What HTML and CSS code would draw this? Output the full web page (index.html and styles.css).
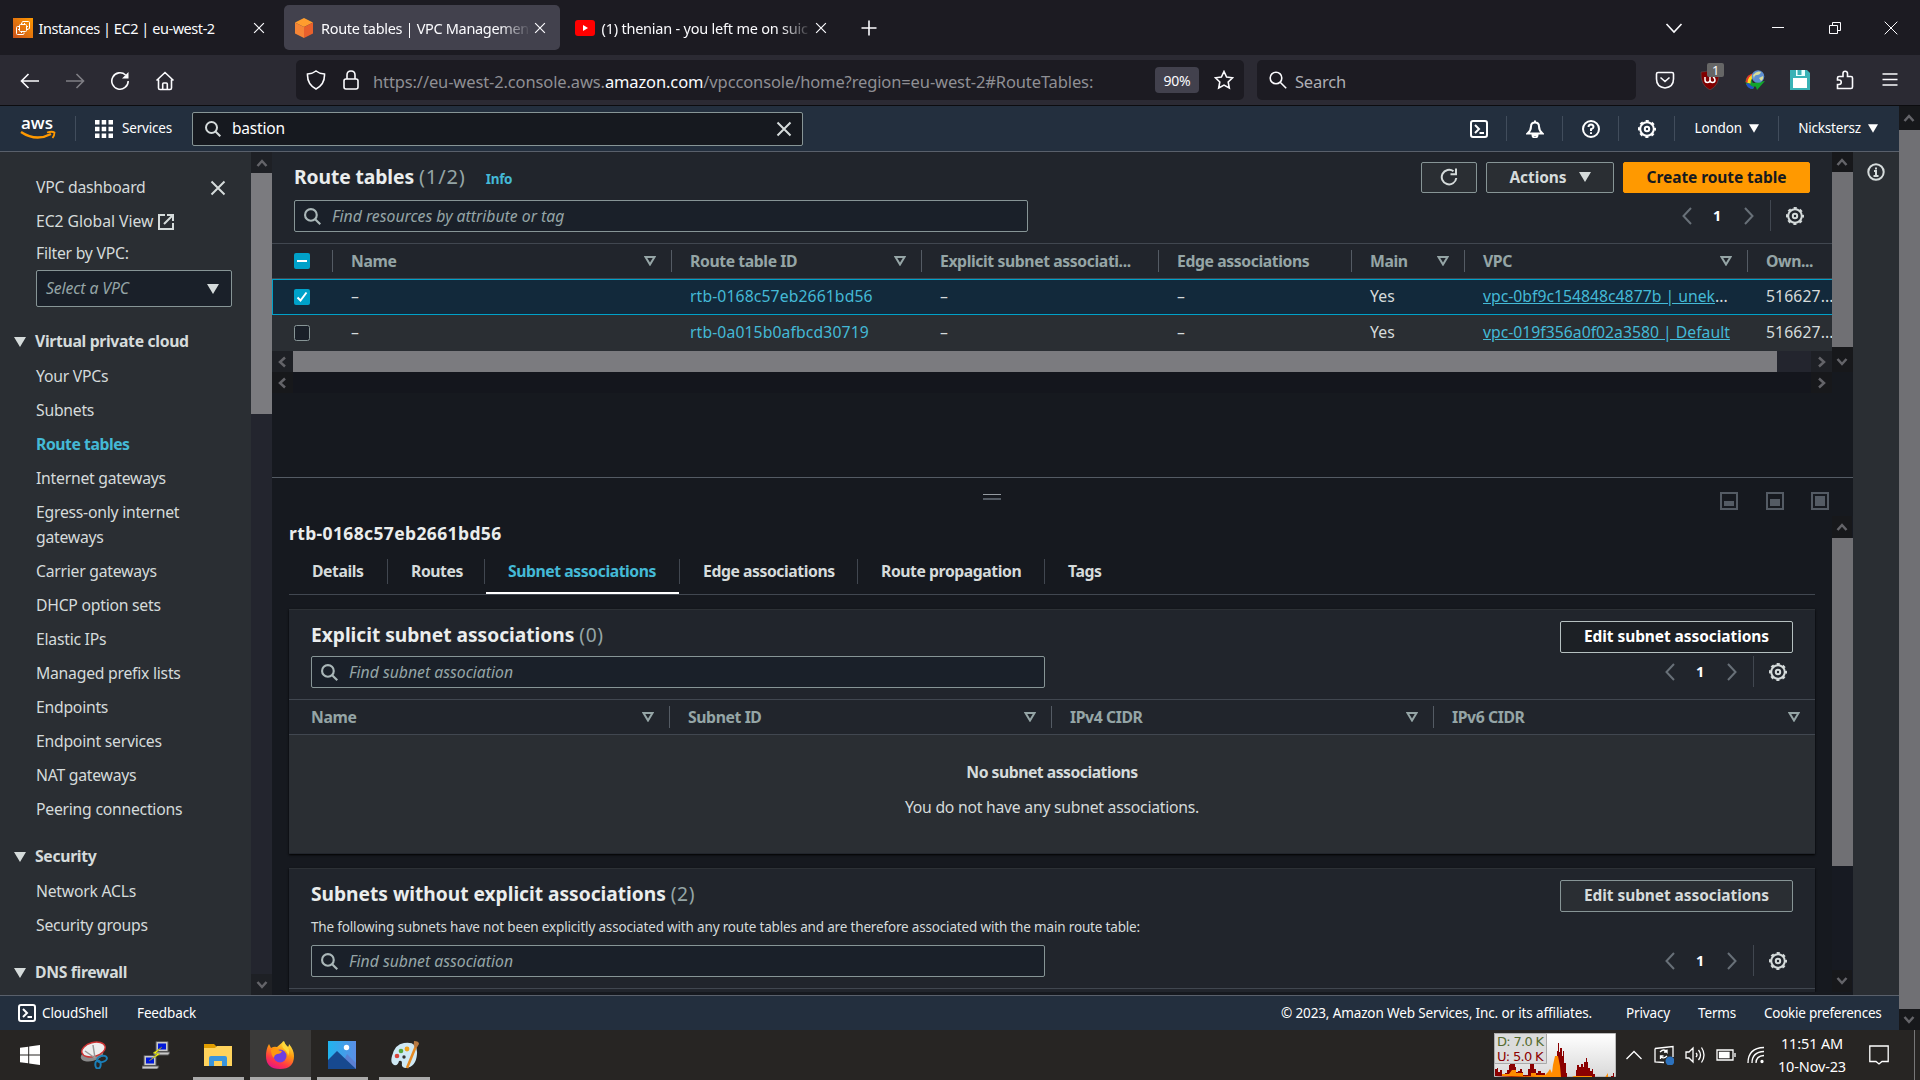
FILE: index.html
```html
<!DOCTYPE html>
<html lang="en">
<head>
<meta charset="utf-8">
<title>Route tables | VPC Management Console</title>
<link rel="stylesheet" href="styles.css">
</head>
<body>
<svg class="defs" width="0" height="0">
  <symbol id="x" viewBox="0 0 16 16"><path d="M1.500 1.500l13 13M14.500 1.500l-13 13"/></symbol>
  <symbol id="search" viewBox="0 0 16 16"><circle cx="6.500" cy="6.500" r="5.500"/><path d="M10.500 10.500L15.300 15.300"/></symbol>
  <symbol id="gear" viewBox="0 0 18 18"><circle cx="9" cy="9" r="6.800"/><circle cx="9" cy="9" r="8" stroke-dasharray="3.140 3.143" stroke-dashoffset="1.570"/><circle cx="9" cy="9" r="2.200"/></symbol>
  <symbol id="shell" viewBox="0 0 18 18"><rect x="1" y="1" width="16" height="16" rx="2"/><path d="M5 5l4 4-4 4M9.500 13H14"/></symbol>
  <symbol id="up" viewBox="0 0 12 8"><path d="M1.500 7L6 2l4.500 5"/></symbol>
  <symbol id="down" viewBox="0 0 12 8"><path d="M1.500 1L6 6l4.500-5"/></symbol>
  <symbol id="left" viewBox="0 0 8 12"><path d="M7 1.500L2 6l5 4.500"/></symbol>
  <symbol id="right" viewBox="0 0 8 12"><path d="M1 1.500L6 6l-5 4.500"/></symbol>
  <symbol id="pl" viewBox="0 0 10 18"><path d="M9 1L1.500 9 9 17"/></symbol>
  <symbol id="pr" viewBox="0 0 10 18"><path d="M1 1l7.500 8L1 17"/></symbol>
  <symbol id="tri" viewBox="0 0 12 10"><path d="M0 0h12L6 10z"/></symbol>
  <symbol id="sort" viewBox="0 0 12 10"><path d="M1.500 1h9L6 8.500z"/></symbol>
</svg>

<div class="tabbar">
  <div class="tab">
    <svg class="fav" viewBox="0 0 20 20"><defs><linearGradient id="ec" x1="0" y1="1" x2="1" y2="0"><stop stop-color="#c8511b"/><stop offset="1" stop-color="#ff9900"/></linearGradient></defs><path fill="url(#ec)" d="M0 0h20v20H0z"/><g fill="none" stroke="#fff"><path d="M9 5.500V4.500Q9 3.500 10 3.500h5.500q1 0 1 1V10q0 1-1 1h-1M5.500 8.500h-1q-1 0-1 1v6q0 1 1 1H10q1 0 1-1v-1"/><rect x="6.500" y="6.500" width="7" height="7" rx="1"/><path d="M8.500 5v1.500M11.500 5v1.500M5 8.500h1.500M5 11.500h1.500M13.500 8.500H15M13.500 11.500H15M8.500 13.500V15"/></g></svg>
    <span class="tab-title t1">Instances | EC2 | eu-west-2</span>
    <svg class="tab-x s"><use href="#x"/></svg>
  </div>
  <div class="tab active">
    <svg class="fav" viewBox="0 0 20 20"><path fill="#ff9d2e" d="M10 0l9 4.500L10 9 1 4.500z"/><path fill="#f58536" d="M1 4.500L10 9v11l-9-4.500z"/><path fill="#e8602c" d="M19 4.500L10 9v11l9-4.500z"/></svg>
    <span class="tab-title t2">Route tables | VPC Management</span>
    <svg class="tab-x s"><use href="#x"/></svg>
  </div>
  <div class="tab">
    <svg class="fav" viewBox="0 0 20 20"><path d="M0 5q0-3 3-3h14q3 0 3 3v10q0 3-3 3H3q-3 0-3-3z" fill="#f00"/><path d="M8 7l5 3-5 3z" fill="#fff"/></svg>
    <span class="tab-title t3">(1) thenian - you left me on suic</span>
    <svg class="tab-x s"><use href="#x"/></svg>
  </div>
  <svg class="plus s" viewBox="0 0 16 16"><path d="M8 .5v15M.5 8h15"/></svg>
  <div class="win">
    <svg class="s" width="18" height="12" viewBox="0 0 18 12"><path d="M1.500 2L9 10l7.500-8"/></svg>
    <svg class="s thin" width="14" height="14" viewBox="0 0 14 14"><path d="M1 6.500h12"/></svg>
    <svg class="s thin" width="14" height="14" viewBox="0 0 14 14"><path d="M1.500 4.500h8v8h-8zM4.500 4V1.500h8v8H10"/></svg>
    <svg class="s thin" width="14" height="14" viewBox="0 0 14 14"><path d="M.7.7l12.600 12.600M13.300.7L.7 13.300"/></svg>
  </div>
</div>

<div class="toolbar">
  <div class="navbtns">
    <svg class="s" viewBox="0 0 20 20"><path d="M19 10H2M8.500 3L1.500 10l7 7"/></svg>
    <svg class="s dim" viewBox="0 0 20 20"><path d="M1 10h17M11.500 3l7 7-7 7"/></svg>
    <svg class="s" viewBox="0 0 20 20"><path d="M18.200 10a8.200 8.200 0 1 1-2.600-6"/><path d="M18.500 1v6.500H12z" fill="#fbfbfe" stroke="none"/></svg>
    <svg class="s" viewBox="0 0 20 20"><path d="M1.500 9.500L10 1.500l8.500 8M3.500 8.500V17q0 1.500 1.500 1.500h10q1.500 0 1.500-1.500V8.500M7.700 18.500V13q0-1 1-1h2.600q1 0 1 1v5.500"/></svg>
  </div>
  <div class="url">
    <svg class="s shield" viewBox="0 0 20 20"><path d="M10 1Q13 3.500 18.500 4q.5 10.500-8.500 15Q1 14.500 1.500 4 7 3.500 10 1z"/></svg>
    <svg class="s lock" viewBox="0 0 18 20"><rect x="2" y="9" width="14" height="10" rx="2"/><path d="M5 9V5q0-4 4-4t4 4v4"/></svg>
    <span class="address">https://eu-west-2.console.aws.<b>amazon.com</b>/vpcconsole/home?region=eu-west-2#RouteTables:</span>
    <span class="zoomlevel">90%</span>
    <svg class="s star" viewBox="0 0 20 20"><path d="M10 1.500l2.600 5.500 6 .8-4.400 4.200 1.100 6-5.300-2.900L4.700 18l1.100-6L1.400 7.800l6-.8z"/></svg>
  </div>
  <div class="searchbar"><svg class="s" viewBox="0 0 18 18"><circle cx="7" cy="7" r="5.800"/><path d="M11.200 11.200l6 6"/></svg><span>Search</span></div>
  <div class="ext">
    <svg class="s" viewBox="0 0 20 20"><path d="M3 2.500h14q1.500 0 1.500 1.500v5q0 8-8.500 9Q1.500 17 1.500 9V4q0-1.500 1.500-1.500zM5.500 7.500l4.500 4 4.500-4"/></svg>
    <span class="ublock"><svg viewBox="0 0 20 20"><path fill="#800000" stroke="#555" stroke-width=".6" d="M10 0q4 2 9 2 1 13-9 18Q0 15 1 2q5 0 9-2z"/><path d="M5 7v3q0 2.500 2.500 2.500T10 10V7M10 10q0 2.500 2.500 2.500T15 10q0-2-2-3" fill="none" stroke="#fff" stroke-width="1.500"/></svg><i>1</i></span>
    <svg viewBox="0 0 20 20"><path d="M10 4Q1 4 .5 12 2 19 8 19l3-5q-5 0-4-6z" fill="#169a35"/><path d="M.5 12Q1 4 10 3v2Q4 6 3 13z" fill="#e5352d"/><path d="M2.500 13q0-7 7-9l1 2.500q-5 1-5 7z" fill="#ffd91f"/><path d="M1 14q2 5 7 5l1-2q-4-1-5-4z" fill="#2450c8"/><path d="M6 13.500L20 11l-8 9-1-3z" fill="#11a52c"/><circle cx="13" cy="6.500" r="6.300" fill="#5e8fd0"/><path d="M8 5q4-5 8-3-1 3-4 3t-3 4zM14 8l4-2q1 3-2 5z" fill="#d7dc9b"/></svg>
    <svg viewBox="0 0 20 20"><path fill="#38b2b6" d="M0 0h17l3 3v17H0z"/><path fill="#e9ffff" d="M6 0h9v6H6z"/><path fill="#38b2b6" d="M7.500 0h4v5h-4z"/><path fill="#fff" d="M3 8h14v10H3z"/></svg>
    <svg class="s" viewBox="0 0 20 20"><path d="M2.500 18.500v-4H4a2 2 0 0 0 0-4.500H2.500V8q0-1.500 1.500-1.500h4V3.500a2 2 0 0 1 4.500 0v3h3.500q1.500 0 1.500 1.500v9q0 1.500-1.500 1.500z"/></svg>
    <svg class="s" viewBox="0 0 20 20"><path d="M2.500 4h15M2.500 9.500h15M2.500 15h15"/></svg>
  </div>
</div>

<div class="page">
<div class="site">
  <header class="aws">
    <svg class="logo" viewBox="0 0 36 22"><text x="1" y="11" textLength="32" lengthAdjust="spacingAndGlyphs">aws</text><path d="M1 14q15 10 30 2" fill="none" stroke="#f90" stroke-width="2.400"/><path d="M27 14.500q5-1.500 7.500 0 0 3-2 5.500" fill="none" stroke="#f90" stroke-width="1.800"/></svg>
    <div class="services"><svg viewBox="0 0 18 18"><path d="M0 0h4.500v4.500H0zM6.700 0h4.500v4.500H6.700zM13.500 0H18v4.500h-4.500zM0 6.700h4.500v4.500H0zM6.700 6.700h4.500v4.500H6.700zM13.500 6.700H18v4.500h-4.500zM0 13.500h4.500V18H0zM6.700 13.500h4.500V18H6.700zM13.500 13.500H18V18h-4.500z" fill="#fff"/></svg><span>Services</span></div>
    <div class="gsearch"><svg class="s"><use href="#search"/></svg><span>bastion</span><svg class="s gx"><use href="#x"/></svg></div>
    <nav class="acct">
      <span class="cell"><svg class="s" viewBox="0 0 18 18"><use href="#shell"/></svg></span>
      <span class="cell"><svg class="s" viewBox="0 0 18 18"><path d="M1.500 13.500Q5 10.500 5 6.500T9 2.500t4 4 3.500 7zM9 2.500V.5"/><path d="M6.500 15a2.500 2.500 0 0 0 5 0z"/></svg></span>
      <span class="cell"><svg class="s" viewBox="0 0 18 18"><circle cx="9" cy="9" r="8"/><path d="M6.500 7q0-2.500 2.500-2.500T11.500 7Q11.500 8.300 9 9.300V11M9 12.200V14"/></svg></span>
      <span class="cell"><svg class="s"><use href="#gear"/></svg></span>
      <span class="cell london">London<svg class="tri"><use href="#tri"/></svg></span>
      <span class="user">Nickstersz<svg class="tri"><use href="#tri"/></svg></span>
    </nav>
  </header>

  <div class="body">
    <aside class="side">
      <div class="row-x"><span>VPC dashboard</span><svg class="s"><use href="#x"/></svg></div>
      <div class="ec2">EC2 Global View <svg class="s" viewBox="0 0 16 16"><path d="M7 1H1v14h14V9M9 1h6v6M15 1L6 10"/></svg></div>
      <div class="filter">Filter by VPC:</div>
      <div class="select"><span>Select a VPC</span><svg><use href="#tri"/></svg></div>
      <h3><svg><use href="#tri"/></svg>Virtual private cloud</h3>
      <ul><li>Your VPCs</li><li>Subnets</li><li class="cur">Route tables</li><li>Internet gateways</li><li>Egress-only internet<br>gateways</li><li>Carrier gateways</li><li>DHCP option sets</li><li>Elastic IPs</li><li>Managed prefix lists</li><li>Endpoints</li><li>Endpoint services</li><li>NAT gateways</li><li>Peering connections</li></ul>
      <h3><svg><use href="#tri"/></svg>Security</h3>
      <ul><li>Network ACLs</li><li>Security groups</li></ul>
      <h3><svg><use href="#tri"/></svg>DNS firewall</h3>
    </aside>
    <div class="vbar side-bar"><b><svg><use href="#up"/></svg></b><i></i><b class="end"><svg><use href="#down"/></svg></b></div>

    <main class="main">
      <section class="top">
        <div class="top-content">
          <div class="head">
            <div class="title-row"><h1>Route tables <span>(1/2)</span></h1><a class="info">Info</a>
              <div class="btns"><button class="refresh"><svg class="s" viewBox="0 0 18 18"><path d="M16.300 10A7.300 7.300 0 1 1 13.500 3.300M16 .5v5.700h-5.500"/></svg></button><button class="actions">Actions<svg><use href="#tri"/></svg></button><button class="primary">Create route table</button></div>
            </div>
            <div class="find-row"><div class="find"><svg class="s"><use href="#search"/></svg><em>Find resources by attribute or tag</em></div>
              <div class="pager"><svg class="s arr"><use href="#pl"/></svg><b>1</b><svg class="s arr"><use href="#pr"/></svg><i></i><svg class="s gear"><use href="#gear"/></svg></div></div>
          </div>
          <div class="tr th">
            <div><svg class="cb" viewBox="0 0 16 16"><rect width="16" height="16" rx="2" fill="#00a1c9"/><path d="M3 8h10" stroke="#fff" stroke-width="2"/></svg></div>
            <div>Name<svg class="sort"><use href="#sort"/></svg></div><div>Route table ID<svg class="sort"><use href="#sort"/></svg></div><div>Explicit subnet associati...</div><div>Edge associations</div><div>Main<svg class="sort"><use href="#sort"/></svg></div><div>VPC<svg class="sort"><use href="#sort"/></svg></div><div>Own...</div>
          </div>
          <div class="tr td sel">
            <div><svg class="cb" viewBox="0 0 16 16"><rect width="16" height="16" rx="2" fill="#00a1c9"/><path d="M3.500 8.500l3 3 6-8" stroke="#fff" stroke-width="2" fill="none"/></svg></div>
            <div>–</div><div><a>rtb-0168c57eb2661bd56</a></div><div>–</div><div>–</div><div>Yes</div><div><a class="u">vpc-0bf9c154848c4877b | unek</a>...</div><div>516627...</div>
          </div>
          <div class="tr td">
            <div><svg class="cb" viewBox="0 0 16 16"><rect x=".5" y=".5" width="15" height="15" rx="2" fill="#1a2029" stroke="#879596"/></svg></div>
            <div>–</div><div><a>rtb-0a015b0afbcd30719</a></div><div>–</div><div>–</div><div>Yes</div><div><a class="u">vpc-019f356a0f02a3580 | Default</a></div><div>516627...</div>
          </div>
          <div class="hbar"><b><svg><use href="#left"/></svg></b><i></i><b class="end"><svg><use href="#right"/></svg></b></div>
          <div class="hbar dark"><b><svg><use href="#left"/></svg></b><b class="end"><svg><use href="#right"/></svg></b></div>
        </div>
        <div class="vbar top-bar"><b><svg><use href="#up"/></svg></b><i></i><b class="end"><svg><use href="#down"/></svg></b></div>
      </section>

      <section class="split">
        <div class="split-head">
          <div class="grip"></div>
          <div class="sizes">
            <svg viewBox="0 0 18 18"><path d="M1 1h16v16H1z"/><path class="f" d="M4 9h10v5H4z"/></svg>
            <svg viewBox="0 0 18 18"><path d="M1 1h16v16H1z"/><path class="f" d="M4 7h10v7H4z"/></svg>
            <svg viewBox="0 0 18 18"><path d="M1 1h16v16H1z"/><path class="f" d="M4 4h10v10H4z"/></svg>
          </div>
        </div>
        <div class="split-body">
          <div class="detail">
            <h2 class="rid">rtb-0168c57eb2661bd56</h2>
            <div class="tabs"><span class="w1">Details</span><span class="w2">Routes</span><span class="w3 on">Subnet associations</span><span class="w4">Edge associations</span><span class="w5">Route propagation</span><span class="w6">Tags</span></div>
            <div class="card c1">
              <div class="card-title"><h2>Explicit subnet associations <span>(0)</span></h2><button class="hover">Edit subnet associations</button></div>
              <div class="find-row"><div class="find"><svg class="s"><use href="#search"/></svg><em>Find subnet association</em></div>
                <div class="pager"><svg class="s arr"><use href="#pl"/></svg><b>1</b><svg class="s arr"><use href="#pr"/></svg><i></i><svg class="s gear"><use href="#gear"/></svg></div></div>
              <div class="tr th"><div>Name<svg class="sort"><use href="#sort"/></svg></div><div>Subnet ID<svg class="sort"><use href="#sort"/></svg></div><div>IPv4 CIDR<svg class="sort"><use href="#sort"/></svg></div><div>IPv6 CIDR<svg class="sort"><use href="#sort"/></svg></div></div>
              <div class="empty"><b>No subnet associations</b><span>You do not have any subnet associations.</span></div>
            </div>
            <div class="card c2">
              <div class="card-title"><h2>Subnets without explicit associations <span>(2)</span></h2><button>Edit subnet associations</button></div>
              <p>The following subnets have not been explicitly associated with any route tables and are therefore associated with the main route table:</p>
              <div class="find-row"><div class="find"><svg class="s"><use href="#search"/></svg><em>Find subnet association</em></div>
                <div class="pager"><svg class="s arr"><use href="#pl"/></svg><b>1</b><svg class="s arr"><use href="#pr"/></svg><i></i><svg class="s gear"><use href="#gear"/></svg></div></div>
              <div class="edge"></div>
            </div>
          </div>
          <div class="vbar split-bar"><b><svg><use href="#up"/></svg></b><i></i><b class="end"><svg><use href="#down"/></svg></b></div>
        </div>
      </section>
    </main>
    <div class="tools"><svg class="s" viewBox="0 0 18 18"><circle cx="9" cy="9" r="7.700"/><path d="M7 8h2v5M6.500 13h5M9 4.500v2"/></svg></div>
  </div>

  <footer class="foot"><svg class="s" viewBox="0 0 18 18"><use href="#shell"/></svg><span class="cs">CloudShell</span><span class="fb">Feedback</span><span class="copy">© 2023, Amazon Web Services, Inc. or its affiliates.</span><span class="pv">Privacy</span><span class="tm">Terms</span><span class="ck">Cookie preferences</span></footer>
</div>
<div class="vbar page-bar"><b><svg><use href="#up"/></svg></b><i></i><b class="end"><svg><use href="#down"/></svg></b></div>
</div>

<div class="taskbar">
  <div class="app start"><svg viewBox="0 0 20 20"><path fill="#fff" d="M0 2.800l8.200-1.100v7.800H0zM9.200 1.500L20 0v9.500H9.200zM0 10.500h8.200v7.800L0 17.200zM9.200 10.500H20V20L9.200 18.500z"/></svg></div>
  <div class="app"><svg viewBox="0 0 28 28"><ellipse cx="12" cy="14" rx="11.500" ry="6" transform="rotate(-15 12 14)" fill="#8b8b8b"/><ellipse cx="13.500" cy="8.500" rx="12" ry="7" transform="rotate(-15 13.500 8.500)" fill="#eee" stroke="#c33" stroke-width="1.500"/><path d="M13 4l2 13M5 10l10 7" stroke="#999" stroke-width="1.500"/><g fill="none" stroke="#1b7fb8" stroke-width="2"><ellipse cx="22" cy="18" rx="5" ry="3" transform="rotate(-15 22 18)"/><ellipse cx="18" cy="23.500" rx="2.700" ry="4"/></g></svg></div>
  <div class="app"><svg viewBox="0 0 28 28"><path fill="#c9c9c9" stroke="#555" d="M14 .5h12v10H14zM12 11h16l-1.500 3H12zM2 14.500h12v10H2zM0 25h17l-1.500 3H0z"/><path fill="#0018d8" d="M16 2.500h8v6h-8zM4 16.500h8v6H4z"/><path fill="#ff0" stroke="#883" stroke-width=".5" d="M20 6l-9 6 4 1-8 7 11-7-4-1z"/></svg></div>
  <div class="app open"><svg viewBox="0 0 28 28"><path fill="#e09d00" d="M0 3h10l3 3v5H0z"/><path fill="#ffd35c" d="M0 7h11l2-2h15v20H0z"/><path fill="#3a95dd" d="M5 25V17q0-2 2-2h14q2 0 2 2v8h-5v-5h-8v5z"/></svg></div>
  <div class="app open focus"><svg viewBox="0 0 28 28"><defs><linearGradient id="fx" x1=".8" y1="0" x2=".3" y2="1"><stop stop-color="#fff44f"/><stop offset=".4" stop-color="#ff980e"/><stop offset=".75" stop-color="#ff3647"/><stop offset="1" stop-color="#e31587"/></linearGradient></defs><path fill="url(#fx)" d="M18 0q1 4 4 6 1-1 1-3 5 6 5 12 0 13-14 13T0 15Q0 8 3 3l2 4q3-2 6-1z"/><circle cx="14" cy="15" r="6.500" fill="#6f3fe0"/><path fill="#ff980e" d="M5 9q4-2 6-1 2 2 5 2-1 3-5 3-3 1-3 4-3-3-3-8z"/><path fill="#ffd93a" d="M17 0q-2 5 1 8 4 3 4 7 3-7-2-11z"/></svg></div>
  <div class="app open"><svg viewBox="0 0 28 28"><defs><linearGradient id="ph" x2="1"><stop stop-color="#20b4ee"/><stop offset="1" stop-color="#5b8fe6"/></linearGradient></defs><path fill="url(#ph)" d="M0 0h28v28H0z"/><path fill="#5b80d2" d="M19 13l9 9v6H12z"/><path fill="#17498f" d="M0 19L9 10l19 18H0z"/><circle cx="18.500" cy="6.500" r="2.700" fill="#fff"/></svg></div>
  <div class="app open"><svg viewBox="0 0 28 28"><path fill="#cfe9f5" d="M13 2q14-2 13 11-1 13-11 14-5 0-4-5 0-3-3-2-1 5-5 4-4-2-2-9Q4 3 13 2z"/><circle cx="6" cy="15" r="2.300" fill="#d9443b"/><circle cx="10" cy="10" r="2.300" fill="#55a83e"/><circle cx="16" cy="8" r="2.400" fill="#f0a21d"/><circle cx="13" cy="16" r="1.700" fill="#333"/><path stroke="#e58a23" stroke-width="2.500" d="M25 5L16 27"/><path fill="#b87a43" d="M23 0q5 0 5 3-1 3-4 4-2-3-1-7z"/></svg></div>
  <div class="tray">
    <div class="net"><svg viewBox="0 0 122 44"><defs><linearGradient id="g" x2="0" y2="1"><stop stop-color="#fff"/><stop offset="1" stop-color="#d9d9d9"/></linearGradient></defs><path fill="url(#g)" stroke="#bbb" d="M.5.500h121v43H.5z"/><path fill="#8b0000" d="M1 43V36h2v-1h1v4h2v-2h2v4h3v-1h2v-3h2v-5h1v-2h5v4h1v5h2v-1h2v-2h2v3h1v3h5v-6h2v-6h4v6h2v4h2v-2h3v2h4v2h5v-2h3v-2h2v-3h1v-12h1v-5h1v-8h1v9h1v-4h2v8h1v-5h1v12h2v10h1v4h2v2h6v-2h1v-7h1v-5h2v2h2v-3h2v3h1v-5h2v-4h1v4h1v6h2v3h2v-2h1v5h2v6h1v2h3v1h9v-2h3v-5h2v-3h1v10z"/><path fill="#ff8c00" d="M8 43v-2h7l3-4h4v3h7v3h8v-3h5v2h9l3-3 2-3 2 4 1-8 2-9h3l2 10 1 11h7l2 1 4-2h18v3h12l4-6v6z"/><path fill="#dcdcdc" stroke="#aaa" d="M.5.500h52v30H.5z"/></svg><span class="d">D: 7.0 K</span><span class="up">U: 5.0 K</span></div>
    <svg class="s" width="18" height="18" viewBox="0 0 18 18"><path d="M1.500 13L9 5.500l7.500 7.500"/></svg>
    <svg class="s" width="20" height="20" viewBox="0 0 20 20"><path d="M1 3.500L19 1.500V12M1 3.500V17l9 .5M6 7q4-4 7 0V4.500M13 7h-3M13 11q-3 3-6 1M6.500 14v-3h3"/><circle cx="16" cy="16" r="4.500" fill="#2d72bd" stroke="none"/></svg>
    <svg class="s" width="20" height="20" viewBox="0 0 20 20"><path d="M1 7h3l4-4v14l-4-4H1zM11 8q2 2 0 4M13.500 5q4 5 0 10M16.500 2.500q5 7.500 0 15"/></svg>
    <svg class="s" width="20" height="14" viewBox="0 0 20 14"><path d="M1 2h16v10H1zM19 5v4"/><path d="M3.500 4.500h9.500v5H3.500z" fill="#fff"/></svg>
    <svg class="s" width="18" height="18" viewBox="0 0 18 18"><path d="M1 17Q1 2 17 1.500M5 17Q5 6 17 5.500M9 17q0-7 8-7.500"/><circle cx="15" cy="15.500" r="1" fill="#fff"/></svg>
    <div class="clock"><span>11:51 AM</span><span>10-Nov-23</span></div>
    <svg class="s note" width="20" height="20" viewBox="0 0 20 20"><path d="M.8 1h18.400v15.500H13L10 19l-3-2.500H.8z"/></svg>
    <span class="peek"></span>
  </div>
</div>
</body>
</html>
```
FILE: styles.css
```css
*{box-sizing:border-box}
body{margin:0;width:1920px;height:1080px;overflow:hidden;background:#16191f;color:#d5dbdb;font:15.750px/25px "Noto Sans","Open Sans",sans-serif;letter-spacing:-.25px}
h1,h2,h3,ul,p{margin:0;padding:0;font-weight:700}
ul{list-style:none;font-weight:400}
svg{display:block;flex:none}
.defs{position:absolute}
.s{fill:none;stroke:currentColor;stroke-width:1.600}
.thin{stroke-width:1}
a{color:#44b9d6}

.tabbar{display:flex;align-items:center;height:55px;background:#1c1b22;color:#fbfbfe;font-size:14.500px;letter-spacing:-.45px}
.tab{display:flex;align-items:center;width:282px;height:45px;padding-left:12.500px;border-radius:5px}
.tab.active{width:276px;margin-left:2px;padding-left:10px;background:#42414d}
.tab:nth-child(3){margin-left:2px}
.fav{width:20px;height:20px}
.tab-title{width:211px;margin-left:6px;padding-top:2px;white-space:nowrap}
.t2{margin-left:7px;width:210px;letter-spacing:-.33px;mask-image:linear-gradient(to right,#000 85%,transparent)}
.t3{margin-left:7px;width:210px;letter-spacing:-.22px;mask-image:linear-gradient(to right,#000 85%,transparent)}
.tab-x{width:12px;height:12px;margin-left:3px}
.plus{width:16px;height:16px;margin-left:17px}
.win{display:flex;align-items:center;margin-left:auto;padding-right:22px}
.win svg:nth-child(2){margin-left:88px}.win svg:nth-child(3){margin-left:43px}.win svg:nth-child(4){margin-left:42px}

.toolbar{display:flex;align-items:center;height:51px;background:#2b2a33;border-bottom:1px solid #0c0c0f;color:#fbfbfe}
.navbtns{display:flex;gap:25px;width:296px;padding:1px 0 0 20px}
.navbtns svg,.ext svg{width:20px;height:20px}
.dim{opacity:.4}
.url{display:flex;align-items:center;width:948px;height:40px;padding-left:10px;background:#1c1b22;border-radius:5px}
.shield{width:20px;height:20px}.lock{width:18px;height:20px;margin-left:16px}
.address{width:782px;margin-left:13px;padding-top:3px;color:#8f8f94;font-size:16.500px;letter-spacing:-.12px;white-space:nowrap}
.address b{font-weight:400;color:#fbfbfe}
.zoomlevel{width:44px;height:26px;border-radius:4px;background:#42414d;text-align:center;font-size:14px;line-height:27px}
.star{width:20px;height:20px;margin-left:15px}
.searchbar{display:flex;align-items:center;width:379px;height:40px;margin-left:13px;padding-left:12px;background:#1c1b22;border-radius:5px;color:#aeaeb4;font-size:16.500px;letter-spacing:-.2px}
.searchbar svg{width:18px;height:18px;margin-right:8px;color:#fbfbfe}
.searchbar span{padding-top:3px}
.ext{display:flex;gap:25px;margin-left:19px}
.ublock{position:relative}
.ublock i{position:absolute;left:7px;top:-7px;width:17px;height:14px;border-radius:2px;background:#666;font:13px/14px "Noto Sans",sans-serif;text-align:center}

.page{display:flex;height:924px}
.site{width:1899px;height:924px;display:flex;flex-direction:column}
.aws{display:flex;align-items:center;height:46px;flex:none;background:#232f3e;border-bottom:1px solid #59606b;color:#fff;font-size:13.500px;letter-spacing:-.2px}
.logo{width:36px;height:22px;margin-left:20px;overflow:visible}
.logo text{font:600 17px/20px "Open Sans",sans-serif;fill:#fff;letter-spacing:0}
.services{display:flex;align-items:center;height:25px;width:117px;margin-left:19px;padding-left:19px;border-left:1px solid #414d5c}
.services svg{width:18px;height:18px;margin-right:9px}
.gsearch{display:flex;align-items:center;width:611px;height:34px;padding-left:12px;background:#16191f;border:1px solid #879596;border-radius:2px;font-size:15.500px}
.gsearch svg{width:16px;height:16px;stroke-width:2;color:#d5dbdb}
.gsearch span{margin-left:11px}
.gsearch .gx{width:16px;margin:0 10px 0 auto}
.acct{display:flex;margin-left:auto;align-items:center}
.cell{display:flex;align-items:center;justify-content:center;width:56px;height:25px;border-right:1px solid #414d5c}
.cell .s{width:18px;height:18px;stroke-width:2}
.cell.london{width:104px}
.tri{width:10px;height:9px;fill:#fff;margin-left:7px}
.user{display:flex;align-items:center;padding:0 21px 0 19px}

.body{display:flex;height:843px;flex:none}
.side{width:251px;height:843px;padding:23px 0 0 36px;background:#2a2e33;overflow:hidden}
.row-x{display:flex;align-items:center;height:25px}
.row-x svg{width:16px;height:16px;margin-left:auto;margin-right:25px;stroke-width:2}
.ec2{display:flex;align-items:center;margin-top:9px;gap:5px;letter-spacing:-.05px}
.ec2 svg{width:16px;height:16px;stroke-width:2}
.filter{margin-top:7px}
.select{display:flex;align-items:center;justify-content:space-between;width:196px;height:37px;margin:4px 0 0;padding:0 12px 0 9px;border:1px solid #879596;border-radius:2px;background:#1a2029;color:#95a5a6;font-style:italic;letter-spacing:-.1px}
.select svg{width:12px;height:10px;fill:#d5dbdb}
.side h3{display:flex;align-items:center;height:25px;margin:22px 0 10px -22px;font-size:15.750px;letter-spacing:-.33px}
.side h3 svg{width:12px;height:10px;margin-right:9px;fill:#d5dbdb}
.side li{margin-bottom:9px}
.side ul+h3{margin-top:22px}
.side .cur{color:#44b9d6;font-weight:700;letter-spacing:-.45px}

.vbar{display:flex;flex-direction:column;width:21px;background:#23252e}
.vbar b,.hbar b{display:flex;align-items:center;justify-content:center;flex:none;width:21px;height:21px;background:#1e2025}
.vbar i{background:#7b7b7f}
.vbar svg{width:12px;height:8px}.hbar svg{width:8px;height:12px}
.vbar svg,.hbar svg{fill:none;stroke:#646469;stroke-width:2.500}
.end{margin-top:auto}
.side-bar{height:843px}.side-bar i{height:241px}
.page-bar{height:924px;background:#17181b}.page-bar b{width:20px;height:24px;background:#17181b}.page-bar i{height:879px;background:#707074}.page-bar .end{height:21px}
.hbar{display:flex;height:21px;background:#23252e}
.hbar b{padding-right:2px}
.hbar i{width:1484px;background:#7b7b7f}
.hbar .end{margin:0 0 0 auto;padding:0}
.hbar.dark{background:#14161d}.hbar.dark b{background:#17181b}

.main{width:1581px;background:#16191f}
.top{display:flex;height:325px}
.top-content{width:1560px}
.top-bar{height:220px;background:#17181b}.top-bar b{width:20px;background:#17181b;height:20px}.top-bar i{height:175px;background:#707074}
.head{height:91px;padding:10px 22px 0;background:#21252c}
.title-row{display:flex;height:31px}
h1{font-size:19.300px;line-height:30px;letter-spacing:-.1px;color:#eaeded}
h1 span,h2 span{font-weight:400;color:#95a5a6}
h1 span{font-size:20px;letter-spacing:.9px}
.info{margin:5px 0 0 20px;font-size:13.500px;font-weight:700;line-height:24px;letter-spacing:-.3px}
.btns{display:flex;margin-left:auto;gap:9px}
button{display:flex;align-items:center;justify-content:center;height:31px;padding:0 0 1px;border:1px solid #879596;border-radius:2px;background:#2a2e33;color:#d5dbdb;font:700 15.500px/25px "Noto Sans",sans-serif;letter-spacing:-.08px}
.refresh{width:56px}.refresh svg{width:18px;height:18px;stroke-width:2}
.actions{width:128px;gap:12px}.actions svg{width:12px;height:10px;fill:#d5dbdb}
.primary{width:187px;background:#f90;border-color:#f90;color:#16191f}
.find-row{display:flex;justify-content:space-between;margin-top:7px}
.find{display:flex;align-items:center;width:734px;height:32px;padding-left:9px;border:1px solid #879596;border-radius:2px;background:#1a2029;color:#95a5a6;letter-spacing:0}
.find svg{width:17px;height:17px;margin-right:11px;stroke-width:2;color:#aab7b8}
.pager{display:flex;align-items:center;height:31px;padding-right:6px;color:#fff}
.pager b{width:10px;margin:0 22px 0 20px;text-align:center;font-size:14.500px}
.pager .arr{width:10px;height:18px;color:#687078;stroke-width:2}
.pager i{width:1px;height:31px;margin:0 15px 0 16px;background:#414750}
.pager .gear{width:18px;height:18px;stroke-width:2;color:#d5dbdb}
.tr{display:grid;grid-template-columns:61px 339px 250px 237px 193px 113px 283px 84px;align-items:center;height:36px;background:#2a2e33;overflow:hidden}
.tr>div{display:flex;align-items:center;padding-left:18px;white-space:nowrap;overflow:hidden}
.tr>div:first-child{padding-left:22px}
.td{padding-bottom:2px;letter-spacing:.1px}
.cb{width:16px;height:16px}
.th{height:36px;background:#21252c;border-top:1px solid #414750;border-bottom:1px solid #414750;color:#95a5a6;font-weight:700;letter-spacing:-.4px}
.th>div{height:22px;border-right:1px solid #545b64}
.th>div:last-child{border-right:0}
.sort{width:12px;height:10px;margin:0 15px 0 auto;fill:none;stroke:#95a5a6;stroke-width:2}
.td .cb{margin-top:1px}
.tr.sel{background:#12293b;border:1px solid #00a1c9;border-right:0}
.tr.sel>div:first-child{padding-left:21px}
.tr.sel>div:nth-child(n+2){padding-left:17px}
.u{text-decoration:underline;letter-spacing:0}

.split{height:518px;border-top:1px solid #545b64}
.split-head{display:flex;height:38px;padding-top:16px}
.grip{width:18px;height:6px;margin-left:711px;border-top:1px solid #959ba1;border-bottom:2px solid #545b64}
.sizes{display:flex;gap:27.500px;margin:-2px 24px 0 auto}
.sizes svg{width:18px;height:18px;fill:none;stroke:#545b64;stroke-width:2}
.sizes .f{fill:#545b64;stroke:none}
.split-body{display:flex;height:476px}
.detail{width:1560px;height:476px;padding:4px 17px 0;overflow:hidden}
.rid{font-size:17.500px;line-height:26px;letter-spacing:.37px;color:#eaeded}
.tabs{display:flex;height:49px;padding-top:1px;border-bottom:1px solid #414750;font-weight:700;letter-spacing:-.44px}
.tabs span{position:relative;display:flex;align-items:center;height:25px;margin-top:12px;padding-left:23px;border-right:1px solid #414750}
.w1{width:99px}.w2{width:97px}.w3{width:195px}.w4{width:178px}.w5{width:187px}.tabs .w6{border:0}
.on{color:#44b9d6}
.on:after{content:"";position:absolute;left:1px;right:0;bottom:-10px;height:2px;background:#fff}
.card{margin-top:14px;background:#21252c;border-top:1px solid #2d3136;box-shadow:0 1px 2px #000}
.c1{height:245px}
.card-title{display:flex;justify-content:space-between;padding:11px 22px 0}
.card h2{font-size:19.200px;line-height:28px;letter-spacing:-.02px;color:#eaeded}
.card h2 span{letter-spacing:.6px}
.card button{width:233px;height:32px}
.card button.hover{background:#1c2025;border-color:#b5c0c0;color:#fff}
.card .find-row{margin-top:3px;padding:0 22px}
.card .tr{grid-template-columns:381px 382px 382px 381px;margin-top:11px}
.empty{display:flex;flex-direction:column;align-items:center;height:118px;padding-top:25px;background:#2a2e33}
.empty b{letter-spacing:-.5px}
.empty span{margin-top:10px}
.c2{height:150px;margin-top:14px}
.c2 p{height:32px;padding:3px 22px 0;font-size:13.500px;font-weight:400;line-height:25px;letter-spacing:-.17px}
.card.c2 .find-row{margin-top:1px}
.edge{margin-top:11px;border-top:1px solid #414750}
.split-bar{height:476px;background:#171a22}.split-bar b{width:20px;background:#17181b;height:22px}.split-bar i{height:328px;background:#707074}
.tools{width:46px;padding:11px 0 0 14px;background:#2a2e33}
.tools svg{width:18px;height:18px;stroke-width:2}

.foot{display:flex;align-items:center;height:35px;flex:none;background:#232f3e;border-top:1px solid #59606b;color:#fff;font-size:13.500px;letter-spacing:-.13px;white-space:nowrap}
.foot svg{width:18px;height:18px;margin-left:18px;stroke-width:2}
.cs{width:95px;margin-left:6px}.copy{width:345px;margin-left:auto}.pv{width:72px}.tm{width:66px}.ck{width:135px;letter-spacing:-.25px}

.taskbar{display:flex;height:50px;background:#272523;color:#fff}
.app{display:flex;align-items:center;justify-content:center;width:51px;margin-right:11.300px;height:50px}
.app svg{width:28px;height:28px}
.app.start{width:60px;margin-right:8px}.start svg{width:20px;height:20px}
.open{border-bottom:3px solid #aaa;padding-top:3px}
.focus{width:61px;margin:0 6px 0 -5px;background:#3b3a39}
.tray{display:flex;align-items:center;margin-left:auto}
.net{position:relative;width:122px;height:44px;margin-right:9px}
.net svg{width:122px;height:44px}
.net span{position:absolute;left:3px;top:1px;font:13px/15px "DejaVu Sans",sans-serif;letter-spacing:-.7px;color:#556b2f}
.net .up{top:16px;color:#8b0000}
.tray>svg{margin-right:11px;stroke-width:1.300}
.clock{display:flex;flex-direction:column;width:72px;margin:0 10px 0 0;text-align:center;font-size:14.500px;line-height:23px;letter-spacing:-.15px;white-space:nowrap}
.tray>.note{margin:0 25px 0 11px}
.peek{width:6px;height:50px;border-left:1px solid #777}
```
